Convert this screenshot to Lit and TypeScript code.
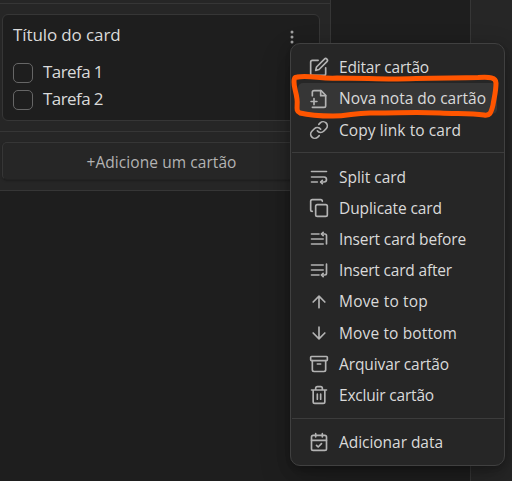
import { LitElement, html, css, svg } from "lit";
import { customElement } from "lit/decorators.js";
import { styleMap } from "lit/directives/style-map.js";

const icons: Record<string, unknown> = {
  edit: svg`<path d="M11 4H4a2 2 0 0 0-2 2v14a2 2 0 0 0 2 2h14a2 2 0 0 0 2-2v-7"/><path d="M18.5 2.5a2.12 2.12 0 0 1 3 3L12 15l-4 1 1-4Z"/>`,
  note: svg`<path d="M4 22h14a2 2 0 0 0 2-2V7.5L14.5 2H6a2 2 0 0 0-2 2v4"/><path d="M14 2v6h6M2.5 15h7M6 11.5v7"/>`,
  link: svg`<path d="M10 13a5 5 0 0 0 7.54.54l3-3a5 5 0 0 0-7.07-7.07l-1.72 1.71"/><path d="M14 11a5 5 0 0 0-7.54-.54l-3 3a5 5 0 0 0 7.07 7.07l1.71-1.71"/>`,
  wrap: svg`<path d="M3 5.4h18M3 12h15a3 3 0 1 1 0 6h-4M3 18h7"/><path d="m16 16-2 2 2 2"/>`,
  copy: svg`<rect x="8" y="8" width="14" height="14" rx="2"/><path d="M4 16a2 2 0 0 1-2-2V4a2 2 0 0 1 2-2h10a2 2 0 0 1 2 2"/>`,
  before: svg`<path d="M3 6h9M3 12h14M3 18h14M21 18V8a2 2 0 0 0-2-2h-4"/><path d="m17 4-2 2 2 2"/>`,
  after: svg`<path d="M3 6h14M3 12h14M3 18h9M21 5v11a2 2 0 0 1-2 2h-4"/><path d="m17 16-2 2 2 2"/>`,
  up: svg`<path d="M12 19V5M5 12l7-7 7 7"/>`,
  down: svg`<path d="M12 5v14M19 12l-7 7-7-7"/>`,
  archive: svg`<rect x="2" y="3" width="20" height="5" rx="1"/><path d="M4 8v11a2 2 0 0 0 2 2h12a2 2 0 0 0 2-2V8M10 12h4"/>`,
  trash: svg`<path d="M3 6h18M19 6v14a2 2 0 0 1-2 2H7a2 2 0 0 1-2-2V6M8 6V4a2 2 0 0 1 2-2h4a2 2 0 0 1 2 2v2M10 11v6M14 11v6"/>`,
  date: svg`<rect x="3" y="4" width="18" height="18" rx="2"/><path d="M16 2v4M8 2v4M3 10h18M9 16l2 2 4-4"/>`,
};

interface Item { icon: string; label: string; width: number; active?: boolean }

const groups: Item[][] = [
  [
    { icon: "edit", label: "Editar cartão", width: 90 },
    { icon: "note", label: "Nova nota do cartão", width: 147, active: true },
    { icon: "link", label: "Copy link to card", width: 122 },
  ],
  [
    { icon: "wrap", label: "Split card", width: 67 },
    { icon: "copy", label: "Duplicate card", width: 103 },
    { icon: "before", label: "Insert card before", width: 127 },
    { icon: "after", label: "Insert card after", width: 113 },
    { icon: "up", label: "Move to top", width: 89 },
    { icon: "down", label: "Move to bottom", width: 118 },
    { icon: "archive", label: "Arquivar cartão", width: 110 },
    { icon: "trash", label: "Excluir cartão", width: 95 },
  ],
  [{ icon: "date", label: "Adicionar data", width: 104 }],
];

const ruler = document.createElement("canvas").getContext("2d")!;

function tracking(label: string, width: number, font: string) {
  ruler.font = font;
  return styleMap({ letterSpacing: `${((width - ruler.measureText(label).width) / label.length).toFixed(3)}px` });
}

const MENU_FONT = '15.5px "Open Sans"';
const TITLE_FONT = '17px "Open Sans"';

@customElement("card-menu")
export class CardMenu extends LitElement {
  static styles = css`
    :host {
      display: block;
      box-sizing: border-box;
      width: 215px;
      height: 423px;
      padding: 7.75px 0 0;
      background: #262626;
      border: 1px solid #404040;
      border-radius: 10px;
      box-shadow: 0 2px 5px rgba(0, 0, 0, 0.12), 0 5px 14px rgba(0, 0, 0, 0.18), 0 12px 32px rgba(0, 0, 0, 0.2);
    }
    .row {
      display: flex;
      align-items: center;
      gap: 10px;
      height: 31.2px;
      margin: 0 7px;
      padding-left: 11px;
      border-radius: 5px;
      white-space: nowrap;
    }
    .active { background: #363636; }
    .divider { height: 1px; margin: 7px 0 7.9px 1px; background: #3c3c3c; }
    .row:last-of-type { margin-top: -0.6px; }
    svg {
      flex: none;
      width: 20px;
      height: 20px;
      fill: none;
      stroke: #b3b3b3;
      stroke-width: 2;
      stroke-linecap: round;
      stroke-linejoin: round;
    }
  `;

  render() {
    return groups.map(
      (group, g) => html`
        ${g ? html`<div class="divider"></div>` : ""}
        ${group.map(
          (i) => html`<div class="row ${i.active ? "active" : ""}">
            <svg viewBox="0 0 24 24">${icons[i.icon]}</svg>
            <span style=${tracking(i.label, i.width, MENU_FONT)}>${i.label}</span>
          </div>`
        )}
      `
    );
  }
}

@customElement("app-root")
export class AppRoot extends LitElement {
  static styles = css`
    :host {
      display: block;
      position: relative;
      width: 512px;
      height: 481px;
      overflow: hidden;
      background: #1e1e1e;
      color: #dadada;
      font: 15.5px/1.3 "Open Sans", "Noto Sans", sans-serif;
    }
    .board { display: flex; justify-content: space-between; height: 481px; }
    .lane {
      box-sizing: border-box;
      width: 331px;
      height: 191px;
      background: #262626;
      border: solid #363636;
      border-width: 0 1px 1px 0;
    }
    .next { box-sizing: border-box; width: 42px; background: #262626; border-left: 1px solid #363636; }
    .head { height: 3px; border-bottom: 1px solid #363636; }
    .cards { box-sizing: border-box; height: 128px; padding: 10px 10px 0 2px; border-bottom: 1px solid #363636; }
    .card {
      box-sizing: border-box;
      height: 107px;
      padding: 8px 22px 0 10px;
      background: #1e1e1e;
      border: 1px solid #363636;
      border-radius: 6px;
    }
    .title { display: flex; justify-content: space-between; height: 36px; font-size: 17px; line-height: 24px; }
    .dots { width: 9px; height: 14px; margin-top: 6.5px; fill: #a0a0a0; }
    .task { display: flex; align-items: center; gap: 10px; height: 27px; font-size: 17px; }
    .box { box-sizing: border-box; width: 20px; height: 20px; border: 1px solid #666; border-radius: 5px; }
    .add {
      box-sizing: border-box;
      height: 38px;
      margin: 10px 10px 0 2px;
      padding-left: 1px;
      line-height: 38px;
      text-align: center;
      color: #b3b3b3;
      background: #262626;
      border: 1px solid #363636;
      border-bottom-color: #222;
      border-radius: 5px;
      box-shadow: 0 1px 2px rgba(0, 0, 0, 0.25);
    }
    card-menu { position: absolute; left: 290px; top: 43px; }
    .mark { position: absolute; left: 0; top: 0; width: 512px; height: 481px; fill: none; stroke: #ff5500; stroke-width: 5; stroke-linejoin: round; }
  `;

  render() {
    return html`
      <div class="board">
        <div class="lane">
          <div class="head"></div>
          <div class="cards">
            <div class="card">
              <div class="title">
                <span style=${tracking("Título do card", 107.5, TITLE_FONT)}>Título do card</span>
                <svg class="dots" viewBox="0 0 9 14">
                  <circle cx="4" cy="2" r="1.5" /><circle cx="4" cy="7" r="1.5" /><circle cx="4" cy="12" r="1.5" />
                </svg>
              </div>
              ${["Tarefa 1", "Tarefa 2"].map(
                (t) => html`<div class="task"><span class="box"></span><span style=${tracking(t, 60, TITLE_FONT)}>${t}</span></div>`
              )}
            </div>
          </div>
          <div class="add"><span style=${tracking("+Adicione um cartão", 150, MENU_FONT)}>+Adicione um cartão</span></div>
        </div>
        <div class="next"></div>
      </div>
      <card-menu></card-menu>
      <svg class="mark" viewBox="0 0 512 481">
        <path d="M297 77C310 75 321 79 337 78C360 78 375 79 393 79C420 78 450 78 478 77.5C490 77 496 77 496 83C496 92 494 98 493 105C491 113 490 116 484 115C470 113 455 114 440 113C415 112 400 113 375 113C355 112 350 116 333 116C320 116 308 115 300 113C295 111 298 106 297 99C296 91 294 88 294 82C294 77 295 77 300 77" />
      </svg>
    `;
  }
}
